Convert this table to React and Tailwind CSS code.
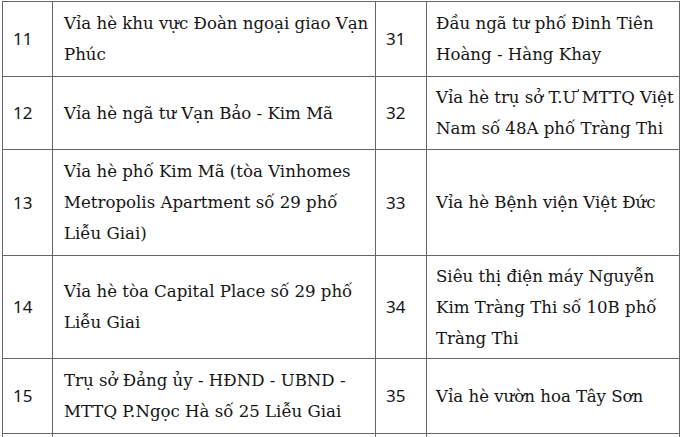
import React from "react";

const rows = [
  { h: 75, a: "11", b: ["Vỉa hè khu vực Đoàn ngoại giao Vạn", "Phúc"], c: "31", d: ["Đầu ngã tư phố Đinh Tiên", "Hoàng - Hàng Khay"] },
  { h: 73, a: "12", b: ["Vỉa hè ngã tư Vạn Bảo - Kim Mã"], c: "32", d: ["Vỉa hè trụ sở T.Ư MTTQ Việt", "Nam số 48A phố Tràng Thi"] },
  { h: 106, a: "13", b: ["Vỉa hè phố Kim Mã (tòa Vinhomes", "Metropolis Apartment số 29 phố", "Liễu Giai)"], c: "33", d: ["Vỉa hè Bệnh viện Việt Đức"] },
  { h: 103, a: "14", b: ["Vỉa hè tòa Capital Place số 29 phố", "Liễu Giai"], c: "34", d: ["Siêu thị điện máy Nguyễn", "Kim Tràng Thi số 10B phố", "Tràng Thi"] },
  { h: 75, a: "15", b: ["Trụ sở Đảng ủy - HĐND - UBND -", "MTTQ P.Ngọc Hà số 25 Liễu Giai"], c: "35", d: ["Vỉa hè vườn hoa Tây Sơn"] },
  { h: 40, a: "", b: [], c: "", d: [] },
];

function Lines({ lines }) {
  return lines.map((l, i) => (
    <div key={i} className="whitespace-nowrap">{l}</div>
  ));
}

export default function App() {
  return (
    <div className="w-[680px] h-[437px] overflow-hidden bg-white pl-[2px] pt-[1px]">
      <table
        className="table-fixed border-collapse w-[677px] text-[#151515]"
        style={{ fontFamily: '"DejaVu Serif", "Liberation Serif", serif' }}
      >
        <colgroup>
          <col className="w-[50px]" />
          <col className="w-[323px]" />
          <col className="w-[51px]" />
          <col className="w-[253px]" />
        </colgroup>
        <tbody>
          {rows.map((r, i) => (
            <tr key={i} style={{ height: r.h }}>
              <td className="border border-[#666666] align-middle pl-[10px] text-[17px] font-['Noto_Sans',sans-serif]">{r.a}</td>
              <td className="border border-[#666666] align-middle pl-[11px] text-[16.6px] leading-[31px]"><Lines lines={r.b} /></td>
              <td className="border border-[#666666] align-middle pl-[10px] text-[17px] font-['Noto_Sans',sans-serif]">{r.c}</td>
              <td className="border border-[#666666] align-middle pl-[9px] text-[16.6px] leading-[31px]"><Lines lines={r.d} /></td>
            </tr>
          ))}
        </tbody>
      </table>
    </div>
  );
}
